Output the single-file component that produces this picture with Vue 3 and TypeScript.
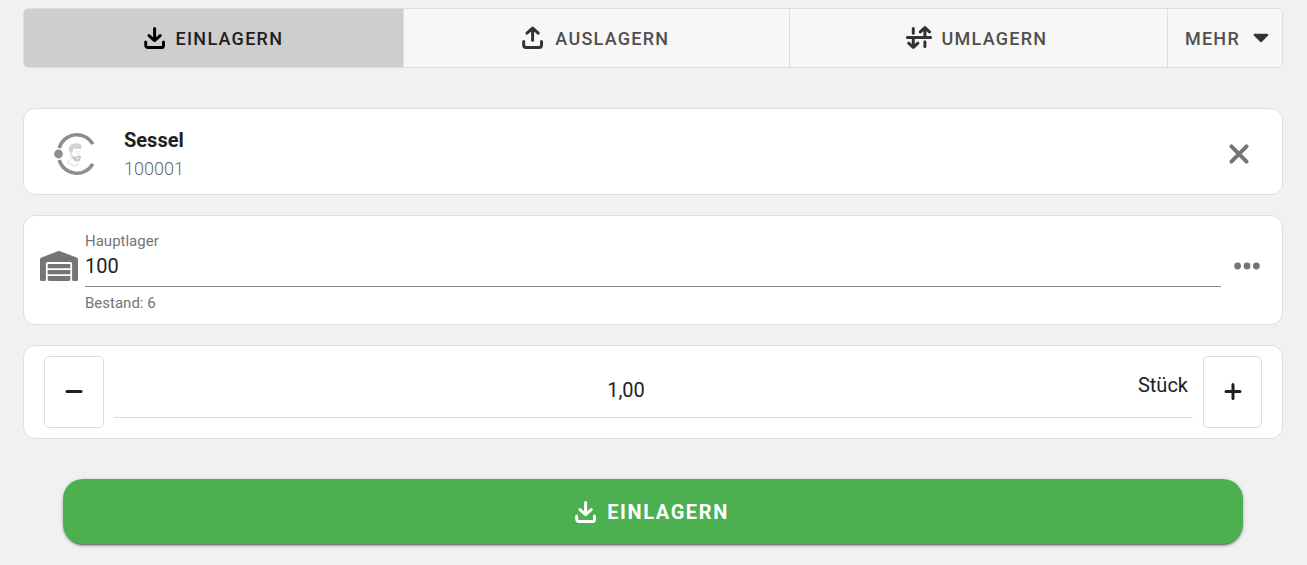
<script setup lang="ts">
import { ref } from 'vue'

type Mode = 'in' | 'out' | 'move'

interface Tab {
  id: Mode
  label: string
}

const tabs: Tab[] = [
  { id: 'in', label: 'Einlagern' },
  { id: 'out', label: 'Auslagern' },
  { id: 'move', label: 'Umlagern' },
]

const mode = ref<Mode>('in')
const storage = ref('100')
const amount = ref('1,00')

function step(delta: number): void {
  const current = parseFloat(amount.value.replace(',', '.')) || 0
  amount.value = Math.max(0, current + delta).toFixed(2).replace('.', ',')
}
</script>

<template>
  <main class="page">
    <nav class="tabs">
      <button
        v-for="tab in tabs"
        :key="tab.id"
        type="button"
        class="tab"
        :class="{ active: mode === tab.id }"
        @click="mode = tab.id"
      >
        <svg v-if="tab.id === 'in'" class="icon" width="22" height="24" viewBox="0 0 22 24" aria-hidden="true">
          <path d="M1.7 16v3.2a2.4 2.4 0 0 0 2.4 2.4h13a2.4 2.4 0 0 0 2.4-2.4V16M10.6 2.4v12M5 9.6l5.6 5.1 5.6-5.1" />
        </svg>
        <svg v-else-if="tab.id === 'out'" class="icon" width="22" height="24" viewBox="1 0 22 24" aria-hidden="true">
          <path d="M1.7 15.4v3.7a2.4 2.4 0 0 0 2.4 2.4h13a2.4 2.4 0 0 0 2.4-2.4v-3.7M10.6 14.2V2.4M5 7.2l5.6-5.1 5.6 5.1" />
        </svg>
        <svg v-else class="icon" width="22" height="24" viewBox="4 0 22 24" aria-hidden="true">
          <path d="M1.4 11.5h23.2M7.3 2.6v4.6M7.3 12v8.5M2.7 17.2l4.6 4.3 4.6-4.3M18.9 11V2.6M14.3 5.9l4.6-4.3 4.6 4.3M18.9 15.8v4.6" />
        </svg>
        <span>{{ tab.label }}</span>
      </button>
      <button type="button" class="tab more">
        <span>Mehr</span>
        <svg class="caret" width="16" height="10" viewBox="0 0 16 10" aria-hidden="true">
          <path d="M1.6.8h12.800c.9 0 1.300 1 .7 1.600L9.200 8.600a1.700 1.700 0 0 1-2.400 0L.9 2.400C.3 1.800.7.8 1.600.8z" />
        </svg>
      </button>
    </nav>

    <section class="card article">
      <svg class="logo" width="42" height="42" viewBox="0 0 42 42" aria-hidden="true">
        <path class="ring" d="M38.800 11.200A18.300 18.300 0 0 0 5.200 15M5.200 27a18.300 18.300 0 0 0 33.600 3.800" />
        <circle class="dot" cx="4.500" cy="21" r="4.400" />
        <path class="face" d="M16.500 18c.2 3 .4 5 1 7.500M16 26l-2 4 7 3.500 4-3M22 19h1.500M25 19h1M24.500 20v2.500" />
        <path class="hair" d="M15.500 18.500c-1.300-3-.6-7 3.200-7.600 3.500-1.300 7.500-.7 8.600 1.600.7 1.600.2 3.200-1 3.900-2.500-.8-5-.6-7-.4l-.9 3.200-1.100 1z" />
        <path class="beard" d="M17.700 21.500l1.400 1.900c1.600.8 3.400-.7 5.200-.5 1.300-.2 2 .1 2.500-.5.3 3-.6 5.800-3.100 6.200-3.600.1-5.700-2.400-6-7.100z" />
        <path class="mouth" d="M22 25.200h3" />
      </svg>
      <div class="article-text">
        <strong>Sessel</strong>
        <span>100001</span>
      </div>
      <button type="button" class="plain close" aria-label="Artikel entfernen">
        <svg width="20" height="20" viewBox="0 0 20 20" aria-hidden="true">
          <path d="M2.400 2.400l15.200 15.200M17.600 2.400L2.400 17.600" />
        </svg>
      </button>
    </section>

    <section class="card place">
      <svg class="warehouse" width="38" height="30" viewBox="0 0 38 30" aria-hidden="true">
        <path d="M0 28.500V8.700c0-1 .6-1.800 1.500-2.200L17.800.3c.8-.3 1.600-.3 2.400 0l16.300 6.200c.9.400 1.500 1.200 1.500 2.200v19.800c0 .9-.6 1.500-1.500 1.500h-2.900c-.9 0-1.500-.6-1.500-1.500V13c0-1.100-.8-1.900-1.900-1.900H7.800c-1.100 0-1.900.8-1.900 1.900v15.500c0 .9-.6 1.500-1.500 1.500H1.500C.6 30 0 29.400 0 28.500z" />
        <path d="M7.700 13h22.600v4.200H7.700zM7.700 19h22.600v4.200H7.700zM7.700 25h22.600v3.600c0 .8-.6 1.400-1.400 1.400H9.100c-.8 0-1.400-.6-1.400-1.400z" />
      </svg>
      <div class="field">
        <label for="storage">Hauptlager</label>
        <input id="storage" v-model="storage" type="text" aria-describedby="stock" />
        <small id="stock">Bestand: 6</small>
      </div>
      <button type="button" class="plain dots" aria-label="Weitere Optionen">
        <svg width="26" height="8" viewBox="0 0 26 8" aria-hidden="true">
          <circle cx="3.600" cy="4" r="3.400" />
          <circle cx="13" cy="4" r="3.400" />
          <circle cx="22.400" cy="4" r="3.400" />
        </svg>
      </button>
    </section>

    <section class="card quantity">
      <button type="button" class="step" aria-label="Weniger" @click="step(-1)">
        <svg width="18" height="18" viewBox="0 0 18 18" aria-hidden="true"><path d="M2 8.500h14" /></svg>
      </button>
      <div class="amount">
        <input id="amount" v-model="amount" type="text" inputmode="decimal" />
        <label for="amount">Stück</label>
      </div>
      <button type="button" class="step" aria-label="Mehr" @click="step(1)">
        <svg width="18" height="18" viewBox="0 0 18 18" aria-hidden="true"><path d="M2 8.500h14M9 1.500v14" /></svg>
      </button>
    </section>

    <button type="button" class="submit">
      <svg class="icon" width="22" height="24" viewBox="0 0 22 24" aria-hidden="true">
        <path d="M1.700 16v3.200a2.400 2.400 0 0 0 2.400 2.400h13a2.400 2.400 0 0 0 2.400-2.400V16M10.600 2.400v12M5 9.600l5.600 5.100 5.600-5.100" />
      </svg>
      <span>Einlagern</span>
    </button>
  </main>
</template>

<style>
body {
  margin: 0;
  background: #f0f2f1;
}
</style>

<style scoped>
.page {
  display: flex;
  flex-direction: column;
  gap: 20px;
  padding: 8px 24px 20px 23px;
  font-family: Roboto, "Liberation Sans", sans-serif;
  color: #212121;
}

.page * {
  box-sizing: border-box;
}

button,
input {
  margin: 0;
  padding: 0;
  border: 0;
  background: none;
  color: inherit;
  font-family: inherit;
}

button {
  cursor: pointer;
}

svg {
  display: block;
  flex: none;
  overflow: visible;
}

.tabs {
  display: flex;
  height: 60px;
  margin-bottom: 20px;
  border: 1px solid #dedede;
  border-radius: 5px;
  overflow: hidden;
  background: #f7f7f7;
}

.tab {
  display: flex;
  flex: 1 1 auto;
  align-items: center;
  justify-content: center;
  gap: 10px;
  padding: 0 16px;
  color: #505050;
  font-size: 18px;
  font-weight: 500;
  letter-spacing: 0.07em;
  text-transform: uppercase;
}

.tab + .tab {
  border-left: 1px solid #dedede;
}

.tab.active {
  background: #cecece;
  color: #212121;
}

.icon {
  fill: none;
  stroke: #333;
  stroke-width: 3;
  stroke-linecap: round;
  stroke-linejoin: round;
}

.tab.active .icon {
  stroke: #000;
}

.tab.more {
  flex: none;
  gap: 13px;
  padding: 0 13px 0 17px;
}

.caret {
  fill: #333;
}

.card {
  display: flex;
  border: 1px solid #dedede;
  border-radius: 12px;
  background: #fff;
}

.article {
  align-items: center;
  padding: 16px 33px 12px 30px;
}

.article-text {
  display: flex;
  flex: 1;
  flex-direction: column;
  padding-left: 28px;
}

.article-text strong {
  font-size: 20px;
  font-weight: 700;
  line-height: 30px;
}

.article-text span {
  color: #666;
  font-size: 18px;
  font-weight: 300;
  line-height: 27px;
}

.ring {
  fill: none;
  stroke: #8d8d8d;
  stroke-width: 3.5;
}

.dot {
  fill: #8d8d8d;
}

.face {
  fill: none;
  stroke: #dadada;
  stroke-width: 1;
}

.hair {
  fill: #d2d2d2;
}

.beard {
  fill: #c6c6c6;
}

.mouth {
  stroke: #fff;
  stroke-width: 1;
}

.plain {
  color: #757575;
}

.close svg {
  fill: none;
  stroke: currentColor;
  stroke-width: 4;
  stroke-linecap: round;
}

.place {
  align-items: center;
  gap: 7px;
  padding: 14px 22px 10px 16px;
}

.warehouse {
  margin-bottom: 12px;
  fill: #757575;
}

.field {
  display: flex;
  flex: 1;
  flex-direction: column;
  color: #757575;
  font-size: 15px;
}

.field label {
  line-height: 22px;
}

.field input {
  width: 100%;
  height: 35px;
  padding-bottom: 7px;
  border-bottom: 1px solid #8a8a8a;
  color: #212121;
  font-size: 20px;
}

.field small {
  padding-top: 5px;
  font-size: 15px;
  line-height: 22px;
}

.dots {
  margin: 0 0 12px 6px;
}

.dots svg {
  fill: currentColor;
}

.quantity {
  gap: 10px;
  padding: 10px 20px;
}

.step {
  display: flex;
  flex: none;
  align-items: center;
  justify-content: center;
  width: 60px;
  height: 72px;
  border: 1px solid #dedede;
  border-radius: 5px;
}

.step:last-child {
  width: 59px;
}

.step svg {
  fill: none;
  stroke: #212121;
  stroke-width: 3;
  stroke-linecap: round;
}

.amount {
  display: flex;
  flex: 1;
  margin-bottom: 10px;
  padding-right: 5px;
  border-bottom: 1px solid #dedede;
  font-size: 20px;
}

.amount input {
  flex: 1;
  min-width: 0;
  padding-top: 6px;
  font-size: 20px;
  text-align: center;
}

.amount label {
  line-height: 58px;
}

input:focus-visible {
  outline: none;
  border-bottom-color: #4caf50;
}

.submit {
  display: flex;
  align-items: center;
  justify-content: center;
  gap: 10px;
  height: 65px;
  margin: 20px 40px 0;
  padding-right: 2px;
  border-radius: 20px;
  background: #4caf50;
  box-shadow: 0 3px 1px -2px rgba(0, 0, 0, 0.3), 0 2px 2px rgba(0, 0, 0, 0.24), 0 1px 5px rgba(0, 0, 0, 0.16);
  color: #fff;
  font-size: 20px;
  font-weight: 700;
  letter-spacing: 0.08em;
  text-transform: uppercase;
}

.submit .icon {
  stroke: #fff;
}
</style>
